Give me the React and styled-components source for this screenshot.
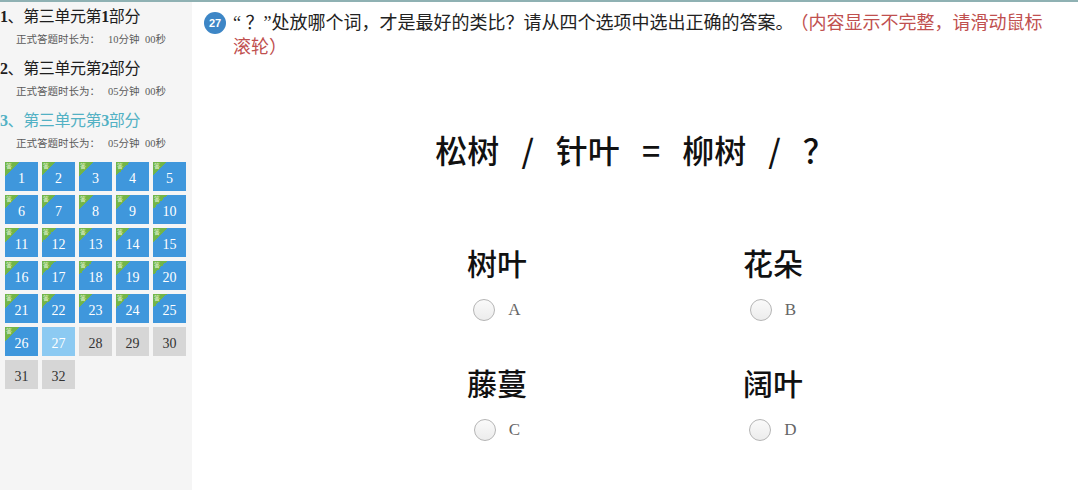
import React from "react";
import styled, { createGlobalStyle } from "styled-components";

const GlobalStyle = createGlobalStyle`
  html, body { margin: 0; padding: 0; background: #fff; }
  body { font-family: "Liberation Serif", "Noto Sans CJK SC", serif; }
  * { box-sizing: border-box; }
`;

const Page = styled.div`
  display: flex;
  width: 1078px;
  height: 490px;
  border-top: 2px solid #8fb1b3;
  overflow: hidden;
`;

const Sidebar = styled.aside`
  width: 192px;
  flex: none;
  background: #f5f5f5;
  padding-top: 4px;
`;

const Section = styled.div`
  margin-bottom: 10px;
`;

const SectionTitle = styled.div`
  font-size: 16px;
  line-height: 22px;
  height: 22px;
  color: ${(p) => (p.$active ? "#52b1c4" : "#1e1e1e")};
  white-space: nowrap;
  letter-spacing: -0.4px;
`;

const Num = styled.b`
  font-weight: bold;
`;

const SectionSub = styled.div`
  margin-top: 4px;
  padding-left: 16px;
  font-size: 10.5px;
  line-height: 16px;
  color: #5a5a5a;
  white-space: nowrap;
`;

const Time = styled.span`
  margin-left: 8px;
  word-spacing: 3px;
`;

const Grid = styled.div`
  display: grid;
  grid-template-columns: repeat(5, 33px);
  grid-auto-rows: 29px;
  gap: 4px;
  padding-left: 5px;
`;

const tileBg = { done: "#3f97dc", current: "#8ccaf2", todo: "#d6d6d6" };

const Tile = styled.div`
  position: relative;
  display: flex;
  align-items: center;
  justify-content: center;
  padding-top: 4px;
  background: ${(p) => tileBg[p.$state]};
  color: ${(p) => (p.$state === "todo" ? "#333" : "#fff")};
  font-family: "Liberation Serif", serif;
  font-size: 14px;
`;

const Corner = styled.span`
  position: absolute;
  top: 0;
  left: 0;
  width: 14px;
  height: 14px;
  background: linear-gradient(135deg, #72b548 50%, transparent 50%);
  color: #e8f5d8;
  font-family: "Noto Sans CJK SC", sans-serif;
  font-size: 6px;
  line-height: 8px;
  padding-left: 1px;
`;

const Main = styled.main`
  flex: 1;
  padding: 10px 10px 0 10px;
  display: flex;
  flex-direction: column;
`;

const QuestionRow = styled.div`
  display: flex;
  align-items: flex-start;
  gap: 7px;
  padding: 0 12px 0 2px;
`;

const Badge = styled.span`
  flex: none;
  width: 22px;
  height: 22px;
  border-radius: 50%;
  background: #3d86c6;
  color: #fff;
  font-family: "Liberation Sans", sans-serif;
  font-weight: bold;
  font-size: 11px;
  display: flex;
  align-items: center;
  justify-content: center;
`;

const QuestionText = styled.div`
  font-size: 18px;
  line-height: 24px;
  color: #222;
  margin-top: -1px;
`;

const Hint = styled.span`
  color: #c0504f;
  margin-left: 6px;
`;

const Equation = styled.div`
  margin-top: 70px;
  display: flex;
  justify-content: center;
  align-items: center;
  gap: 22px;
  height: 40px;
  font-family: "Noto Sans CJK SC", sans-serif;
  font-weight: 500;
  font-size: 32px;
  color: #111;
`;

const Options = styled.div`
  margin-top: 73px;
  display: grid;
  grid-template-columns: repeat(2, 276px);
  justify-content: center;
  row-gap: 41px;
`;

const Option = styled.label`
  display: flex;
  flex-direction: column;
  align-items: center;
  gap: 17px;
`;

const Word = styled.div`
  font-family: "Noto Sans CJK SC", sans-serif;
  font-weight: 500;
  font-size: 30px;
  line-height: 40px;
  color: #111;
`;

const Choice = styled.div`
  display: flex;
  align-items: center;
  gap: 13px;
  height: 22px;
`;

const Radio = styled.span`
  width: 22px;
  height: 22px;
  border-radius: 50%;
  border: 1px solid #b5b5b5;
  background: linear-gradient(180deg, #fafafa, #ececec);
`;

const Letter = styled.span`
  font-family: "Liberation Serif", serif;
  font-size: 17px;
  color: #666;
`;

const sections = [
  { n: "1", time: "10分钟 00秒" },
  { n: "2", time: "05分钟 00秒" },
  { n: "3", time: "05分钟 00秒", active: true },
];

const options = [
  { word: "树叶", letter: "A" },
  { word: "花朵", letter: "B" },
  { word: "藤蔓", letter: "C" },
  { word: "阔叶", letter: "D" },
];

export default function App() {
  const tiles = Array.from({ length: 32 }, (_, i) => i + 1);
  return (
    <>
      <GlobalStyle />
      <Page>
        <Sidebar>
          {sections.map((s) => (
            <Section key={s.n}>
              <SectionTitle $active={s.active}>
                <Num>{s.n}</Num>、第三单元第<Num>{s.n}</Num>部分
              </SectionTitle>
              <SectionSub>
                正式答题时长为：<Time>{s.time}</Time>
              </SectionSub>
            </Section>
          ))}
          <Grid>
            {tiles.map((n) => {
              const state = n <= 26 ? "done" : n === 27 ? "current" : "todo";
              return (
                <Tile key={n} $state={state}>
                  {state === "done" && <Corner>答</Corner>}
                  {n}
                </Tile>
              );
            })}
          </Grid>
        </Sidebar>
        <Main>
          <QuestionRow>
            <Badge>27</Badge>
            <QuestionText>
              “ ？”处放哪个词，才是最好的类比？请从四个选项中选出正确的答案。
              <Hint>（内容显示不完整，请滑动鼠标滚轮）</Hint>
            </QuestionText>
          </QuestionRow>
          <Equation>
            <span>松树</span>
            <span>/</span>
            <span>针叶</span>
            <span>=</span>
            <span>柳树</span>
            <span>/</span>
            <span>？</span>
          </Equation>
          <Options>
            {options.map((o) => (
              <Option key={o.letter}>
                <Word>{o.word}</Word>
                <Choice>
                  <Radio />
                  <Letter>{o.letter}</Letter>
                </Choice>
              </Option>
            ))}
          </Options>
        </Main>
      </Page>
    </>
  );
}
